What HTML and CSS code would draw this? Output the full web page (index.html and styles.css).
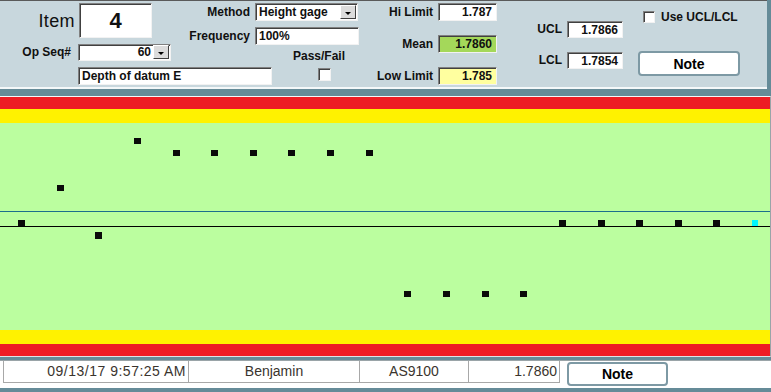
FILE: index.html
```html
<!DOCTYPE html>
<html lang="en">
<head>
    <meta charset="UTF-8">
    <title>SPC Entry</title>
    <link rel="stylesheet" href="styles.css">
</head>
<body>
    <div class="window">
        <div class="header">
            <div class="left-group">
                <div class="upper">
                    <div class="col-item">
                        <div class="item-row">
                            <span class="item-label">Item</span>
                            <div class="field item-box">4</div>
                        </div>
                        <div class="op-row">
                            <span class="label op-label">Op Seq#</span>
                            <div class="field combo op-combo"><span class="combo-text">60</span><span class="drop"></span></div>
                        </div>
                    </div>
                    <div class="col-method">
                        <div class="row method-row">
                            <span class="label method-label">Method</span>
                            <div class="field combo method-combo"><span class="combo-text">Height gage</span><span class="drop"></span></div>
                        </div>
                        <div class="row freq-row">
                            <span class="label method-label">Frequency</span>
                            <div class="field freq">100%</div>
                        </div>
                        <div class="passfail">Pass/Fail</div>
                    </div>
                </div>
                <div class="lower">
                    <div class="field desc">Depth of datum E</div>
                    <span class="check pass-check"></span>
                </div>
            </div>
            <div class="col-limits">
                <div class="row limit-row first">
                    <span class="label limit-label">Hi Limit</span>
                    <div class="field num limit">1.787</div>
                </div>
                <div class="row limit-row">
                    <span class="label limit-label">Mean</span>
                    <div class="field num limit mean">1.7860</div>
                </div>
                <div class="row limit-row">
                    <span class="label limit-label">Low Limit</span>
                    <div class="field num limit low">1.785</div>
                </div>
            </div>
            <div class="col-ucl">
                <div class="row ucl-row first">
                    <span class="label ucl-label">UCL</span>
                    <div class="field num ucl">1.7866</div>
                </div>
                <div class="row ucl-row">
                    <span class="label ucl-label">LCL</span>
                    <div class="field num ucl">1.7854</div>
                </div>
            </div>
            <div class="col-note">
                <div class="use-row">
                    <span class="check"></span>
                    <span class="label">Use UCL/LCL</span>
                </div>
                <div class="note-btn top-note">Note</div>
            </div>
        </div>

        <div class="chart">
            <div class="band red"></div>
            <div class="band yellow"></div>
            <div class="plot">
                <svg width="770" height="207" viewBox="0 0 770 207">
                    <rect x="0" y="88" width="770" height="1" fill="#1c6e8c"/>
                    <rect x="0" y="103" width="770" height="1" fill="#000"/>
                    <g fill="#0a0a0a">
                        <rect x="18" y="97" width="7" height="6"/>
                        <rect x="57" y="62" width="7" height="6"/>
                        <rect x="95" y="109" width="7" height="7"/>
                        <rect x="134" y="15" width="7" height="6"/>
                        <rect x="173" y="27" width="7" height="6"/>
                        <rect x="211" y="27" width="7" height="6"/>
                        <rect x="250" y="27" width="7" height="6"/>
                        <rect x="288" y="27" width="7" height="6"/>
                        <rect x="327" y="27" width="7" height="6"/>
                        <rect x="366" y="27" width="7" height="6"/>
                        <rect x="404" y="168" width="7" height="6"/>
                        <rect x="443" y="168" width="7" height="6"/>
                        <rect x="482" y="168" width="7" height="6"/>
                        <rect x="520" y="168" width="7" height="6"/>
                        <rect x="559" y="97" width="7" height="6"/>
                        <rect x="598" y="97" width="7" height="6"/>
                        <rect x="636" y="97" width="7" height="6"/>
                        <rect x="675" y="97" width="7" height="6"/>
                        <rect x="713" y="97" width="7" height="6"/>
                    </g>
                    <rect x="752" y="97" width="6" height="6" fill="#00f6ff"/>
                </svg>
            </div>
            <div class="band yellow"></div>
            <div class="band red"></div>
        </div>

        <div class="footer">
            <div class="cell c-date">09/13/17 9:57:25 AM</div>
            <div class="cell c-user">Benjamin</div>
            <div class="cell c-std">AS9100</div>
            <div class="cell c-val">1.7860</div>
            <div class="note-btn foot-note">Note</div>
        </div>
    </div>
</body>
</html>
```

FILE: styles.css
```css
body{
    margin: 0;
    background-color: #658b98;
    font-family: "Liberation Sans", Arial, sans-serif;
    color: #101010;
}
.window{
    width: 771px;
    height: 392px;
    display: flex;
    flex-direction: column;
    overflow: hidden;
}

/* top form */
.header{
    width: 767px;
    height: 86px;
    background-color: #c8d7dd;
    border-top: 1px solid #5a5a5a;
    border-bottom: 2px solid #f4f8f9;
    display: flex;
    align-items: flex-start;
}
.label{
    font-weight: bold;
    font-size: 12px;
    line-height: 18px;
    white-space: nowrap;
}
.row{
    display: flex;
    align-items: center;
}
.field{
    box-sizing: border-box;
    height: 18px;
    background-color: #fff;
    border-top: 1px solid #808080;
    border-left: 1px solid #808080;
    border-bottom: 1px solid #f2f2f2;
    border-right: 1px solid #f2f2f2;
    box-shadow: inset 1px 1px 0 #404040;
    font-weight: bold;
    font-size: 12px;
    line-height: 16px;
    padding: 0 3px;
    white-space: nowrap;
}
.num{
    text-align: right;
    padding-right: 4px;
}
.check{
    display: inline-block;
    box-sizing: border-box;
    width: 12px;
    height: 12px;
    background-color: #fff;
    border-top: 1px solid #808080;
    border-left: 1px solid #808080;
    border-bottom: 1px solid #f2f2f2;
    border-right: 1px solid #f2f2f2;
    box-shadow: inset 1px 1px 0 #404040;
}

.left-group{
    width: 360px;
}
.upper{
    display: flex;
    height: 62px;
}
.col-item{
    width: 180px;
}
.item-row{
    display: flex;
    align-items: center;
    margin-top: 2px;
}
.item-label{
    width: 75px;
    text-align: right;
    font-size: 18px;
    letter-spacing: 0.4px;
    margin-right: 4px;
    padding-top: 1px;
}
.item-box{
    width: 73px;
    height: 35px;
    text-align: center;
    font-size: 22px;
    line-height: 33px;
}
.op-row{
    display: flex;
    align-items: center;
    margin-top: 5px;
}
.op-label{
    width: 71px;
    text-align: right;
    margin-right: 7px;
}
.combo{
    display: flex;
    align-items: center;
    padding: 0 1px 0 3px;
}
.combo-text{
    flex: 1;
}
.op-combo{
    width: 93px;
    height: 17px;
}
.op-combo .combo-text{
    text-align: right;
    padding-right: 2px;
}
.drop{
    box-sizing: border-box;
    width: 16px;
    height: 14px;
    background-color: #dcdcdc;
    border: 1px solid;
    border-color: #fff #404040 #404040 #fff;
    display: flex;
    align-items: flex-end;
    justify-content: center;
    padding-bottom: 3px;
}
.drop::after{
    content: "";
    width: 0;
    height: 0;
    border-left: 3px solid transparent;
    border-right: 3px solid transparent;
    border-top: 3px solid #000;
}
.col-method{
    width: 180px;
}
.method-label{
    width: 70px;
    text-align: right;
    margin-right: 5px;
}
.method-row{
    margin-top: 2px;
}
.method-combo{
    width: 103px;
}
.freq-row{
    margin-top: 6px;
}
.freq{
    width: 104px;
}
.passfail{
    margin-top: 4px;
    margin-left: 113px;
    font-weight: bold;
    font-size: 12px;
    line-height: 14px;
}
.lower{
    display: flex;
    align-items: flex-start;
    margin-top: 4px;
}
.desc{
    width: 194px;
    margin-left: 78px;
}
.pass-check{
    width: 13px;
    height: 13px;
    margin-left: 46px;
    margin-top: 1px;
}

.col-limits{
    width: 137px;
    margin-top: 2px;
}
.limit-row + .limit-row{
    margin-top: 14px;
}
.limit-label{
    width: 73px;
    text-align: right;
    margin-right: 5px;
}
.limit{
    width: 59px;
}
.mean{
    background-color: #a4d85a;
}
.low{
    background-color: #ffff9f;
}

.col-ucl{
    width: 126px;
    margin-top: 19px;
}
.ucl-row + .ucl-row{
    margin-top: 13px;
}
.ucl-label{
    width: 65px;
    text-align: right;
    margin-right: 5px;
}
.ucl{
    width: 56px;
    height: 17px;
}

.col-note{
    width: 144px;
}
.use-row{
    display: flex;
    align-items: center;
    gap: 6px;
    margin-top: 7px;
    margin-left: 20px;
}
.note-btn{
    box-sizing: border-box;
    background-color: #fff;
    border: 2px solid #7d99a4;
    border-radius: 4px;
    font-weight: bold;
    font-size: 14px;
    text-align: center;
    color: #000;
}
.top-note{
    width: 102px;
    height: 25px;
    line-height: 22px;
    margin-top: 25px;
    margin-left: 15px;
}

/* chart */
.chart{
    width: 770px;
    margin-top: 7px;
    border-top: 1px solid #f4f8f9;
    border-bottom: 1px solid #dde4e6;
    border-right: 1px solid #9aa4a8;
    display: flex;
    flex-direction: column;
}
.band.red{
    height: 12px;
    background-color: #ed1c24;
}
.band.yellow{
    height: 14px;
    background-color: #fff200;
}
.plot{
    height: 207px;
    background-color: #bbfe9f;
}
.plot svg{
    display: block;
}

/* bottom strip */
.footer{
    margin-top: 3px;
    height: 27px;
    background-color: #fff;
    border-top: 1px solid #9aa4a8;
    display: flex;
    align-items: flex-start;
    padding-left: 3px;
}
.cell{
    box-sizing: border-box;
    height: 22px;
    border-right: 1px solid #a8a8a8;
    border-bottom: 1px solid #a8a8a8;
    font-size: 14px;
    line-height: 21px;
    color: #3a342e;
    white-space: nowrap;
}
.c-date{
    width: 186px;
    border-left: 1px solid #a8a8a8;
    text-align: right;
    padding-right: 2px;
    letter-spacing: 0.5px;
}
.c-user{
    width: 171px;
    text-align: center;
}
.c-std{
    width: 109px;
    text-align: center;
}
.c-val{
    width: 91px;
    text-align: right;
    padding-right: 2px;
}
.foot-note{
    width: 101px;
    height: 24px;
    line-height: 20px;
    margin-left: 7px;
    margin-top: 1px;
}
```
